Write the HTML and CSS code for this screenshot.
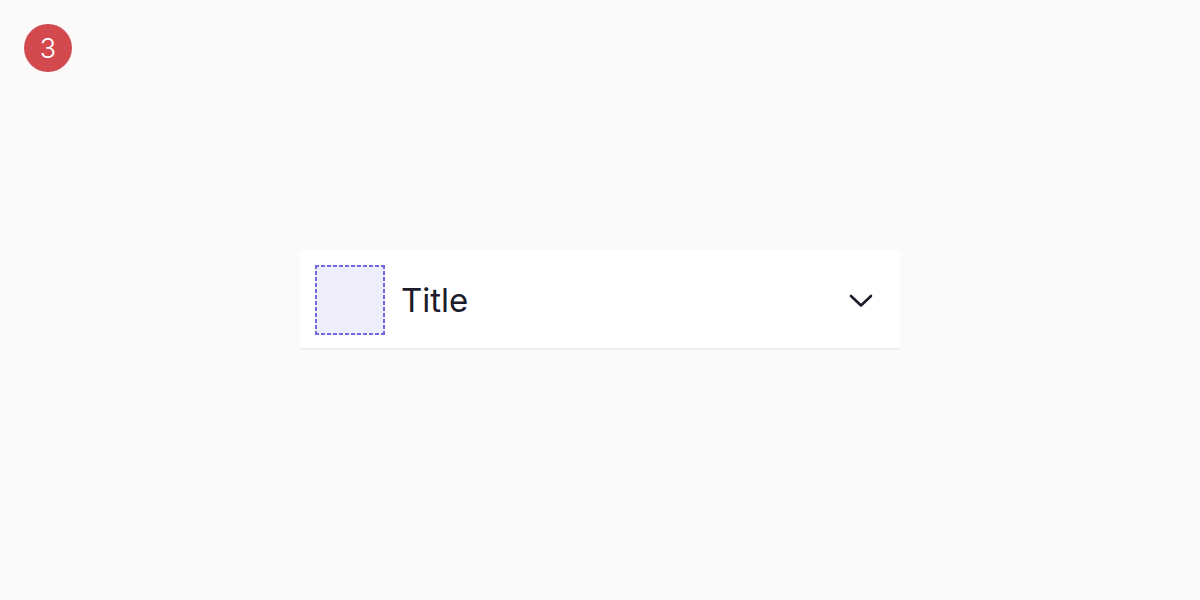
FILE: index.html
```html
<!DOCTYPE html>
<html>
<head>
<meta charset="utf-8">
<link rel="stylesheet" href="styles.css">
</head>
<body>
<div class="badge">3</div>
<main class="stage">
  <div class="accordion">
    <div class="slot"></div>
    <div class="title">Title</div>
    <button class="toggle" aria-label="Expand">
      <svg width="24" height="24" viewBox="0 0 24 24" fill="none">
        <path d="M2 8 L12 17.5 L22 8" stroke="#1d1c2b" stroke-width="2.6" stroke-linecap="round" stroke-linejoin="round"/>
      </svg>
    </button>
  </div>
</main>
</body>
</html>
```
FILE: styles.css
```css
html, body {
  margin: 0;
  padding: 0;
  background: #fafafa;
  font-family: Inter, "Noto Sans", sans-serif;
}
body {
  width: 1200px;
  height: 600px;
  position: relative;
}
.badge {
  position: absolute;
  left: 24px;
  top: 24px;
  width: 48px;
  height: 48px;
  border-radius: 50%;
  background: #d3494e;
  color: #fff;
  font-family: Inter, sans-serif;
  font-weight: 300;
  font-size: 27px;
  display: flex;
  align-items: center;
  justify-content: center;
}
.stage {
  height: 600px;
  display: flex;
  align-items: center;
  justify-content: center;
}
.accordion {
  width: 600px;
  box-sizing: border-box;
  background: #fff;
  border-bottom: 2px solid #ececf3;
  padding: 15px 27px 13px 15px;
  display: flex;
  align-items: center;
  gap: 16px;
}
.slot {
  width: 70px;
  height: 70px;
  flex: none;
  background:
    repeating-linear-gradient(90deg, #7068e6 0 4px, transparent 4px 6px) left top / 100% 2px no-repeat,
    repeating-linear-gradient(90deg, #7068e6 0 4px, transparent 4px 6px) left bottom / 100% 2px no-repeat,
    repeating-linear-gradient(180deg, #7068e6 0 4px, transparent 4px 6px) left top / 2px 100% no-repeat,
    repeating-linear-gradient(180deg, #7068e6 0 4px, transparent 4px 6px) right top / 2px 100% no-repeat,
    #efeefd;
}
.title {
  flex: 1;
  font-size: 33px;
  color: #1d1c2b;
  line-height: 1;
  padding-top: 1px;
}
.toggle {
  border: 0;
  background: none;
  padding: 0;
  width: 24px;
  height: 24px;
  display: flex;
}
```
